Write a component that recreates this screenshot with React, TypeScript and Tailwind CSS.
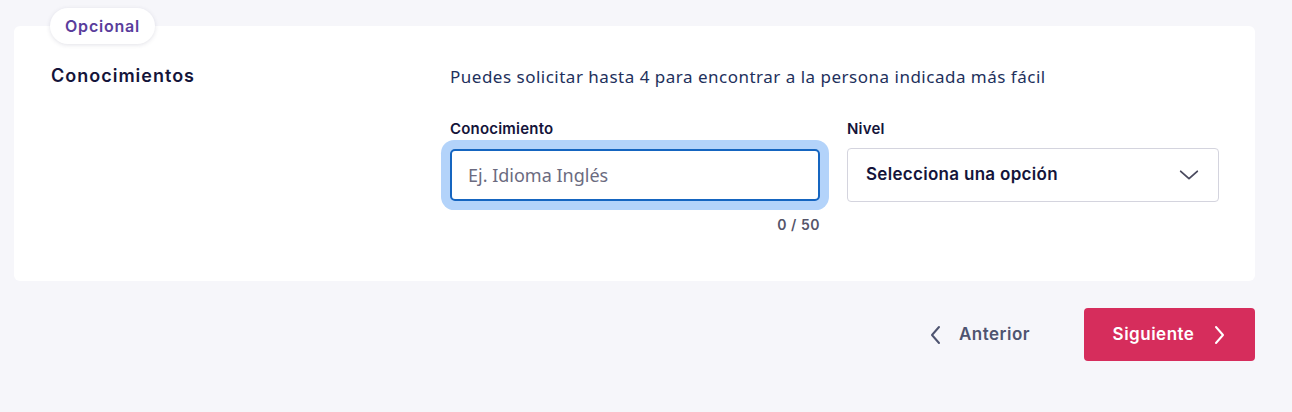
import React from "react";

const heading = { fontFamily: "Inter, 'Noto Sans', sans-serif" };
const body = { fontFamily: "'Noto Sans', 'Open Sans', sans-serif" };

function ChevronDown() {
  return (
    <svg width="22" height="22" viewBox="0 0 24 24" fill="none" stroke="#4a4a5e" strokeWidth="2" strokeLinecap="round" strokeLinejoin="round">
      <path d="M3 8l9 8 9-8" />
    </svg>
  );
}

function ChevronLeft({ color }: { color: string }) {
  return (
    <svg width="14" height="22" viewBox="0 0 14 22" fill="none" stroke={color} strokeWidth="2" strokeLinecap="round" strokeLinejoin="round">
      <path d="M10 3L3 11l7 8" />
    </svg>
  );
}

function ChevronRight({ color }: { color: string }) {
  return (
    <svg width="14" height="22" viewBox="0 0 14 22" fill="none" stroke={color} strokeWidth="2" strokeLinecap="round" strokeLinejoin="round">
      <path d="M4 3l7 8-7 8" />
    </svg>
  );
}

export default function App() {
  return (
    <div className="w-[1292px] h-[412px] bg-[#f6f6fa] pl-[14px] pt-[26px]">
      {/* tarjeta */}
      <div className="relative w-[1241px] h-[255px] bg-white rounded-md">
        <span
          className="absolute left-[36px] -top-[18px] h-[36px] px-[15px] flex items-center rounded-full bg-white shadow-[0_1px_4px_rgba(60,60,100,0.15)] text-[16px] tracking-[0.8px] font-semibold text-[#5a3d9c]"
          style={heading}
        >
          Opcional
        </span>

        <div className="flex pt-[38px]">
          <div className="w-[436px] pl-[37px]">
            <h3 className="text-[18px] leading-[24px] tracking-[1px] font-semibold text-[#14143a]" style={heading}>
              Conocimientos
            </h3>
          </div>

          <div className="flex flex-col">
            <p className="text-[17px] leading-[24px] tracking-[0.5px] text-[#22305c] mt-[1px]" style={body}>
              Puedes solicitar hasta 4 para encontrar a la persona indicada más fácil
            </p>

            <div className="flex gap-[27px] mt-[30px]">
              <div className="w-[370px] flex flex-col">
                <label className="text-[15px] leading-[20px] tracking-[0.2px] font-semibold text-[#14143a] mb-[10px]" style={heading}>
                  Conocimiento
                </label>
                <div className="h-[52px] rounded-[5px] border-2 border-[#1565c0] shadow-[0_0_0_9px_#b3d3fa] bg-white flex items-center px-[16px]">
                  <span className="text-[18px] text-[#6b6b80]" style={body}>
                    Ej. Idioma Inglés
                  </span>
                </div>
                <span className="self-end mt-[14px] text-[14px] leading-[20px] tracking-[0.5px] font-semibold text-[#55556a]" style={heading}>
                  0 / 50
                </span>
              </div>

              <div className="w-[372px] flex flex-col">
                <label className="text-[15px] leading-[20px] tracking-[0.2px] font-semibold text-[#14143a] mb-[9px]" style={heading}>
                  Nivel
                </label>
                <div className="h-[54px] rounded-[4px] border border-[#d4d4de] bg-white flex items-center justify-between pl-[18px] pr-[18px]">
                  <span className="text-[17px] tracking-[0.3px] font-semibold text-[#14143a]" style={heading}>
                    Selecciona una opción
                  </span>
                  <ChevronDown />
                </div>
              </div>
            </div>
          </div>
        </div>
      </div>

      {/* navegación */}
      <div className="w-[1241px] flex justify-end items-center gap-[54px] mt-[27px]">
        <button className="flex items-center gap-[16px] text-[17px] tracking-[0.5px] font-semibold text-[#4e5470]" style={heading}>
          <ChevronLeft color="#4e5470" />
          Anterior
        </button>
        <button
          className="w-[171px] h-[53px] rounded-[4px] bg-[#d62d5c] flex items-center justify-center gap-[18px] text-[17px] tracking-[0.5px] font-semibold text-white"
          style={heading}
        >
          Siguiente
          <ChevronRight color="#ffffff" />
        </button>
      </div>
    </div>
  );
}
